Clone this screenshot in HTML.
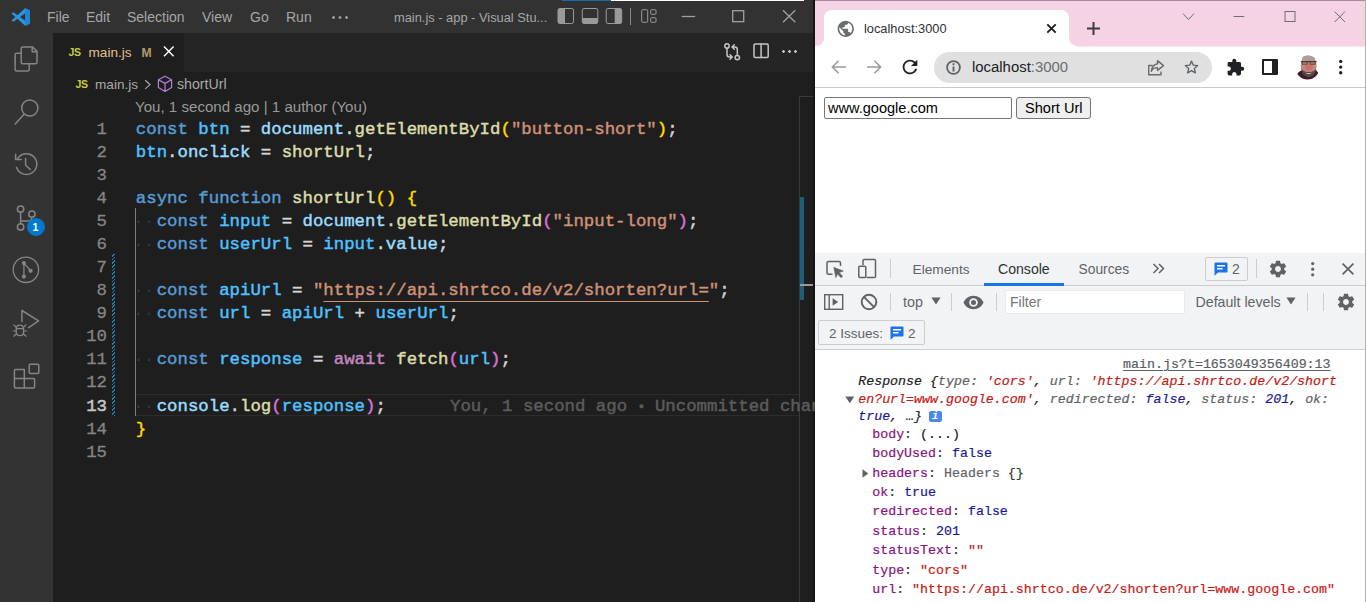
<!DOCTYPE html>
<html>
<head>
<meta charset="utf-8">
<title>screenshot</title>
<style>
*{box-sizing:border-box;margin:0;padding:0}
html,body{width:1366px;height:602px;overflow:hidden;background:#1e1e1e;font-family:"Liberation Sans",sans-serif;}
.abs{position:absolute}
#root{position:relative;width:1366px;height:602px;overflow:hidden}
/* ---------- VS CODE ---------- */
#vsc{position:absolute;left:0;top:0;width:815px;height:602px;background:#1e1e1e;overflow:hidden}
#titlebar{position:absolute;left:0;top:0;width:815px;height:33px;background:#323233;color:#a6a6a6;font-size:14px}
#titlebar .m{position:absolute;top:9px;line-height:17px;white-space:nowrap}
#actbar{position:absolute;left:0;top:33px;width:53px;height:569px;background:#333333}
#tabs{position:absolute;left:53px;top:33px;width:762px;height:39px;background:#252526}
#tab1{position:absolute;left:0;top:0;width:131px;height:39px;background:#1e1e1e}
#crumbs{position:absolute;left:53px;top:72px;width:762px;height:24px;background:#1e1e1e;color:#a9a9a9;font-size:14px}
.code{position:absolute;left:135.8px;white-space:pre;font-family:"Liberation Mono",monospace;font-size:17.37px;line-height:23px;height:23px;color:#d4d4d4;-webkit-text-stroke:0.45px}
.ln{position:absolute;left:53px;width:54px;text-align:right;font-family:"Liberation Mono",monospace;font-size:17.37px;line-height:23px;height:23px;color:#858585;-webkit-text-stroke:0.3px}
.js{font-size:10.5px;font-weight:bold;color:#cbcb41;line-height:12px;letter-spacing:-0.3px}
.ln.cur{color:#c6c6c6;-webkit-text-stroke:0.5px}
.ws{color:#383838;position:relative;left:-2.5px;-webkit-text-stroke:0}.u{text-decoration:underline;text-underline-offset:6px;text-decoration-thickness:1px}
.k{color:#569cd6}.v{color:#4fc1ff}.f{color:#dcdcaa}.s{color:#ce9178}.p{color:#9cdcfe}.y{color:#ffd700}.pk{color:#da70d6}.c{color:#c586c0}
/* ---------- CHROME ---------- */
#chr{position:absolute;left:815px;top:0;width:551px;height:602px;background:#fff;overflow:hidden}
#strip{position:absolute;left:0;top:0;width:551px;height:46px;background:#f6d3e4}
#ctab{position:absolute;left:9px;top:10px;width:245px;height:36px;background:#fff;border-radius:8px 8px 0 0}
#tool{position:absolute;left:0;top:46px;width:551px;height:42px;background:#fff;border-bottom:1px solid #c9c9c9}
#omni{position:absolute;left:119px;top:6px;width:278px;height:31px;border-radius:16px;background:#e0e0e0}
/* ---------- DEVTOOLS ---------- */
#dt{position:absolute;left:0;top:253px;width:551px;height:349px;background:#fff}
#dttabs{position:absolute;left:0;top:0;width:551px;height:33px;background:#f1f3f4;border-bottom:1px solid #cbcdd1;font-size:14.5px;color:#5f6368}
#dtbar{position:absolute;left:0;top:33px;width:551px;height:64px;background:#f1f3f4;border-bottom:1px solid #cbcdd1;font-size:14.5px;color:#5f6368}
.cl{position:absolute;white-space:pre;font-family:"Liberation Mono",monospace;font-size:13.3px;line-height:19px;height:19px;color:#303942;-webkit-text-stroke:0.2px}
.cl.it{font-style:italic;color:#202124}.cd{color:#202124}
.cn{color:#881280}.cs{color:#c41a16}.cb{color:#1a1a96}.cg{color:#5f6368}
</style>
</head>
<body>
<div id="root">

<!-- ================= VS CODE ================= -->
<div id="vsc">
  <div id="titlebar">
    <div class="abs" style="left:562px;top:0;width:49px;height:1px;background:#1b6aa5"></div>
    <div class="abs" style="left:611px;top:0;width:193px;height:1px;background:#ffffff"></div>
    <svg class="abs" style="left:10.500px;top:8px" width="19.500" height="18" viewBox="0 0 100 100" preserveAspectRatio="none">
      <path d="M72 2 L97 13 V87 L72 98 L33 60 L13 76 L2 69 L23 50 L2 31 L13 24 L33 40 Z M73 29 L46 50 L73 71 Z" fill="#2b96e0" fill-rule="evenodd"/>
      <path d="M72 2 L97 13 V87 L72 98 L73 71 V29 Z" fill="#1f86d0"/>
    </svg>
    <span class="m" style="left:47px">File</span>
    <span class="m" style="left:86px">Edit</span>
    <span class="m" style="left:127px">Selection</span>
    <span class="m" style="left:202px">View</span>
    <span class="m" style="left:250px">Go</span>
    <span class="m" style="left:286px">Run</span>
    <div class="abs" style="left:332px;top:15.5px;width:18px;height:3px;background:radial-gradient(circle at 1.5px 1.5px,#a6a6a6 1.1px,transparent 1.5px) 0 0/6.5px 3px repeat-x"></div>
    <span class="m" style="left:394px;font-size:12.85px">main.js - app - Visual Stu...</span>
    <svg class="abs" style="left:557px;top:7px" width="102" height="19" viewBox="0 0 102 19" fill="none" stroke="#9a9a9a" stroke-width="1">
      <rect x="1" y="1.5" width="15.5" height="15" rx="1.8"/><path d="M1 3 q0-1.5 1.5-1.5 H8 V16.5 H2.5 q-1.5 0-1.5-1.5Z" fill="#9a9a9a" stroke="none"/>
      <rect x="25.3" y="1.5" width="15.5" height="15" rx="1.8"/><path d="M25.3 11 H40.8 V15 q0 1.5-1.5 1.5 H26.8 q-1.5 0-1.5-1.5Z" fill="#9a9a9a" stroke="none"/>
      <rect x="49.2" y="1.5" width="15.5" height="15" rx="1.8"/><path d="M57.7 1.5 H63.2 q1.5 0 1.5 1.5 V15 q0 1.5-1.5 1.5 H57.7Z" fill="#9a9a9a" stroke="none"/>
      <path d="M73.5 1 V18" stroke="#8a8a8a"/>
      <rect x="84.7" y="2.7" width="6" height="12.6" rx="1"/><rect x="93.7" y="2.7" width="5.3" height="4.6" rx="1"/><rect x="93.7" y="10.7" width="5.3" height="4.6" rx="1"/>
    </svg>
    <svg class="abs" style="left:680px;top:8px" width="120" height="18" viewBox="0 0 120 18" fill="none" stroke="#a0a0a0" stroke-width="1.3">
      <path d="M1.7 8.5 H15.2"/>
      <rect x="52.7" y="2.7" width="11" height="11"/>
      <path d="M103 2.2 L115.3 14.2 M115.3 2.2 L103 14.2"/>
    </svg>
  </div>
  <div id="actbar">
    <svg class="abs" style="left:0;top:0" width="53" height="569" viewBox="0 33 53 569" fill="none" stroke="#858585" stroke-width="1.5" stroke-linejoin="round" stroke-linecap="round">
      <!-- explorer -->
      <path d="M22.7 47 H32.6 L37 51.4 V62.2 q0 1.5-1.5 1.5 H22.7 q-1.5 0-1.5-1.5 V48.5 q0-1.5 1.5-1.5 Z M32.2 47.2 V51.8 H36.8"/>
      <path d="M21 53.2 H16.6 q-1.5 0-1.5 1.5 V69.4 q0 1.5 1.5 1.5 H27.7 q1.5 0 1.5-1.5 V64"/>
      <!-- search -->
      <circle cx="29.8" cy="108" r="8.1"/><path d="M23.9 114.4 L15.2 124"/>
      <!-- history -->
      <path d="M17.6 158.6 A10.4 10.4 0 1 1 16.6 167.5"/>
      <path d="M15.6 154.2 V159.6 H21.2" />
      <path d="M25.6 158.4 V165.2 L30.2 169.4"/>
      <!-- source control -->
      <circle cx="20.6" cy="209.1" r="3.2"/><circle cx="20.6" cy="226.9" r="3.2"/><circle cx="31.9" cy="214.1" r="3.2"/>
      <path d="M20.6 212.4 V223.6 M31.9 217.4 q0 3.6-4.5 3.6 H20.8"/>
      <!-- git graph -->
      <circle cx="25.9" cy="269.8" r="12.7" stroke-width="1.3"/>
      <circle cx="23.9" cy="263.1" r="2.1" fill="#858585" stroke="none"/><circle cx="30.6" cy="270.8" r="2.1" fill="#858585" stroke="none"/><circle cx="23.9" cy="276.6" r="2.1" fill="#858585" stroke="none"/>
      <path d="M23.9 263.1 V276.6 M23.9 263.1 L30.6 270.8" stroke-width="1.3"/>
      <!-- run and debug -->
      <path d="M21.9 321.5 V310.5 L38.6 320.8 L28.6 327.6"/>
      <path d="M16.2 329.3 q0-4.2 3.7-4.2 q3.7 0 3.7 4.2 V331.4 q0 4.2-3.7 4.2 q-3.7 0-3.7-4.2 Z M16.4 328.6 H23.4" stroke-width="1.4"/>
      <path d="M16 327 L13.8 324.8 M23.8 327 L26 324.8 M15.8 331 H13.2 M24 331 H26.6 M16.2 334 L13.8 336.2 M23.6 334 L26 336.2" stroke-width="1.2"/>
      <!-- extensions -->
      <path d="M14.4 370.6 q0-1.2 1.2-1.2 H24.3 V378.4 H33.4 q1.2 0 1.2 1.2 V386.8 q0 1.2-1.2 1.2 H15.6 q-1.2 0-1.2-1.2 Z M14.4 378.4 H24.3 V388"/>
      <rect x="29.2" y="364.2" width="9.6" height="9.2" rx="1.2"/>
    </svg>
    <div class="abs" style="left:26.5px;top:184.5px;width:18px;height:18px;border-radius:9px;background:#007acc;color:#fff;font-size:10.5px;font-weight:bold;line-height:18px;text-align:center">1</div>
  </div>
  <div id="tabs"><div id="tab1">
      <span class="abs js" style="left:15.5px;top:13px">JS</span>
      <span class="abs" style="left:35.5px;top:11px;font-size:13.6px;line-height:17px;color:#e2c08d">main.js</span>
      <span class="abs" style="left:88.5px;top:11.5px;font-size:12.2px;font-weight:bold;line-height:17px;color:#b39a6f">M</span>
      <svg class="abs" style="left:109px;top:12px" width="14" height="14" viewBox="0 0 14 14" stroke="#ffffff" stroke-width="1.4" fill="none"><path d="M2 1.6 L11.6 11.2 M11.6 1.6 L2 11.2"/></svg>
    </div>
    <svg class="abs" style="left:670px;top:9px" width="76" height="20" viewBox="0 0 76 20" fill="none" stroke="#c5c5c5" stroke-width="1.5" stroke-linecap="round" stroke-linejoin="round">
      <circle cx="4" cy="4" r="2.2"/><path d="M4 6.2 V12.5 q0 2.5 2.5 2.5 H9 M7 12.8 L9.3 15 L7 17.2"/>
      <circle cx="14.3" cy="15.6" r="2.2"/><path d="M14.3 13.4 V7.5 q0-2.5-2.5-2.5 H9.3 M11.3 2.8 L9 5 L11.3 7.2"/>
      <rect x="31" y="2" width="14.2" height="13.4" rx="1.2"/><path d="M38.1 2 V15.4"/>
    </svg>
    <div class="abs" style="left:729px;top:17px;width:16px;height:3px;background:radial-gradient(circle at 1.5px 1.5px,#c5c5c5 1.2px,transparent 1.5px) 0 0/6px 3px repeat-x"></div>
  </div>
  <div id="crumbs">
    <span class="abs js" style="left:22.5px;top:5.5px">JS</span>
    <span class="abs" style="left:42px;top:4px;font-size:13.6px;line-height:17px">main.js</span>
    <svg class="abs" style="left:90px;top:5px" width="10" height="14" viewBox="0 0 10 14" fill="none" stroke="#a9a9a9" stroke-width="1.2"><path d="M2.2 3.3 L7 7.6 L2.2 11.9"/></svg>
    <svg class="abs" style="left:104px;top:3px" width="16" height="18" viewBox="0 0 16 18" fill="none" stroke="#b180d7" stroke-width="1.2" stroke-linejoin="round"><path d="M8 1.3 L14.6 4.8 V12.6 L8 16.4 L1.4 12.6 V4.8 Z M1.4 4.8 L8 8.4 L14.6 4.8 M8 8.4 V16.4"/></svg>
    <span class="abs" style="left:124px;top:4px;font-size:14.2px;line-height:17px">shortUrl</span>
  </div>
  <div id="editor">
    <div class="abs" style="left:135px;top:98px;font-size:15.1px;line-height:18px;color:#999999;white-space:nowrap" id="lens">You, 1 second ago | 1 author (You)</div>
    <div class="abs" id="curline" style="left:136px;top:393.5px;width:664px;height:22.6px;border-top:1px solid #2c2c2c;border-bottom:1px solid #2c2c2c"></div>
    <div class="abs" id="guide" style="left:135px;top:208px;width:1px;height:208px;background:#7e7e7e"></div>
    <div class="abs" id="hatch" style="left:112px;top:254px;width:3px;height:162px;background:repeating-linear-gradient(-45deg,#1b81a8 0,#1b81a8 1.2px,#1e1e1e 1.2px,#1e1e1e 2.6px)"></div>
    <div class="abs" id="ruler" style="left:799px;top:96px;width:16px;height:506px;border-left:1px solid #3a3a3a;border-top:1px solid #3a3a3a"></div>
    <div class="abs" style="left:800px;top:197px;width:4px;height:103px;background:#1b5f7c"></div>
    <div class="abs" style="left:800px;top:284px;width:14px;height:2px;background:#9a9a9a"></div>
    <div class="abs" style="left:813px;top:0;width:2px;height:602px;background:#151515"></div>
    <div class="ln" style="top:117.60px">1</div>
    <div class="code" style="top:117.60px"><span class="k">const</span> <span class="v">btn</span> = <span class="p">document</span>.<span class="f">getElementById</span><span class="y">(</span><span class="s">"button-short"</span><span class="y">)</span>;</div>
    <div class="ln" style="top:140.68px">2</div>
    <div class="code" style="top:140.68px"><span class="v">btn</span>.<span class="p">onclick</span> = <span class="f">shortUrl</span>;</div>
    <div class="ln" style="top:163.76px">3</div>
    <div class="ln" style="top:186.84px">4</div>
    <div class="code" style="top:186.84px"><span class="k">async</span> <span class="k">function</span> <span class="f">shortUrl</span><span class="y">()</span> <span class="y">{</span></div>
    <div class="ln" style="top:209.92px">5</div>
    <div class="code" style="top:209.92px"><span class="ws">··</span><span class="k">const</span> <span class="v">input</span> = <span class="p">document</span>.<span class="f">getElementById</span><span class="pk">(</span><span class="s">"input-long"</span><span class="pk">)</span>;</div>
    <div class="ln" style="top:233.00px">6</div>
    <div class="code" style="top:233.00px"><span class="ws">··</span><span class="k">const</span> <span class="v">userUrl</span> = <span class="v">input</span>.<span class="p">value</span>;</div>
    <div class="ln" style="top:256.08px">7</div>
    <div class="ln" style="top:279.16px">8</div>
    <div class="code" style="top:279.16px"><span class="ws">··</span><span class="k">const</span> <span class="v">apiUrl</span> = <span class="s">"<span class="u">https://api.shrtco.de/v2/shorten?url=</span>"</span>;</div>
    <div class="ln" style="top:302.24px">9</div>
    <div class="code" style="top:302.24px"><span class="ws">··</span><span class="k">const</span> <span class="v">url</span> = <span class="v">apiUrl</span> + <span class="v">userUrl</span>;</div>
    <div class="ln" style="top:325.32px">10</div>
    <div class="ln" style="top:348.40px">11</div>
    <div class="code" style="top:348.40px"><span class="ws">··</span><span class="k">const</span> <span class="v">response</span> = <span class="c">await</span> <span class="f">fetch</span><span class="pk">(</span><span class="v">url</span><span class="pk">)</span>;</div>
    <div class="ln" style="top:371.48px">12</div>
    <div class="ln cur" style="top:394.56px">13</div>
    <div class="code" style="top:394.56px"><span class="ws">··</span><span class="p">console</span>.<span class="f">log</span><span class="pk">(</span><span class="v">response</span><span class="pk">)</span>;</div>
    <div class="ln" style="top:417.64px">14</div>
    <div class="code" style="top:417.64px"><span class="y">}</span></div>
    <div class="ln" style="top:440.72px">15</div>
    <div class="code" id="ghost" style="left:450px;top:394.56px;color:#5c5c5c">You, 1 second ago <span style="display:inline-block;width:7px;text-align:center;font-size:13px">•</span> Uncommitted changes</div>
  </div>
</div>

<!-- ================= CHROME ================= -->
<div id="chr">
  <div id="strip">
    <div class="abs" style="left:0;top:0;width:551px;height:1px;background:#a98a9c"></div>
    <div id="ctab"></div>
    <svg class="abs" style="left:1px;top:38px" width="8" height="8" viewBox="0 0 8 8"><path d="M8 0 V8 H0 A8 8 0 0 0 8 0Z" fill="#fff"/></svg>
    <svg class="abs" style="left:254px;top:38px" width="8" height="8" viewBox="0 0 8 8"><path d="M0 0 V8 H8 A8 8 0 0 1 0 0Z" fill="#fff"/></svg>
    <!-- globe favicon -->
    <svg class="abs" style="left:20.800px;top:18.800px" width="19.500" height="19.500" viewBox="0 0 24 24"><path fill="#6a6d70" d="M12 2C6.48 2 2 6.48 2 12s4.48 10 10 10 10-4.48 10-10S17.52 2 12 2zm-1 17.93c-3.95-.49-7-3.85-7-7.93 0-.62.08-1.21.21-1.79L9 15v1c0 1.1.9 2 2 2v1.930zm6.900-2.540c-.26-.81-1-1.390-1.900-1.390h-1v-3c0-.55-.45-1-1-1H8v-2h2c.55 0 1-.45 1-1V7h2c1.100 0 2-.9 2-2v-.41c2.930 1.190 5 4.060 5 7.410 0 2.080-.8 3.970-2.100 5.390z"/></svg>
    <span class="abs" style="left:49px;top:20px;font-size:12.8px;line-height:17px;color:#2f3033;white-space:nowrap">localhost:3000</span>
    <svg class="abs" style="left:231px;top:23px" width="11" height="11" viewBox="0 0 11 11" stroke="#1f1f1f" stroke-width="1.9" fill="none"><path d="M1.3 1.3 L9.7 9.7 M9.7 1.3 L1.3 9.7"/></svg>
    <svg class="abs" style="left:271px;top:21px" width="15" height="15" viewBox="0 0 15 15" stroke="#3c3c3c" stroke-width="2" fill="none"><path d="M7.5 1 V14 M1 7.500 H14"/></svg>
    <svg class="abs" style="left:360px;top:8px" width="180" height="18" viewBox="0 0 180 18" stroke="#6e6e6e" stroke-width="1" fill="none">
      <path d="M8 5.600 L13.500 11.500 L19 5.600"/>
      <path d="M58.600 8.500 H69.200"/>
      <rect x="110" y="3.500" width="10" height="10"/>
      <path d="M159.600 3.600 L170 14 M170 3.600 L159.600 14"/>
    </svg>
  </div>
  <div class="abs" style="left:262px;top:46px;width:289px;height:1px;background:#f9e6ef;z-index:2"></div>
  <div id="tool">
    <svg class="abs" style="left:15px;top:12px" width="18" height="18" viewBox="0 0 18 18" stroke="#9b9b9b" stroke-width="1.6" fill="none"><path d="M16 9 H2.600 M8.600 2.800 L2.400 9 L8.600 15.200"/></svg>
    <svg class="abs" style="left:50px;top:12px" width="18" height="18" viewBox="0 0 18 18" stroke="#9b9b9b" stroke-width="1.6" fill="none"><path d="M2 9 H15.400 M9.400 2.800 L15.600 9 L9.400 15.200"/></svg>
    <svg class="abs" style="left:84px;top:10px" width="22" height="22" viewBox="0 0 24 24"><path fill="#202124" d="M17.650 6.350C16.200 4.900 14.210 4 12 4c-4.420 0-7.990 3.580-7.990 8s3.570 8 7.990 8c3.730 0 6.840-2.550 7.730-6h-2.080c-.82 2.330-3.040 4-5.650 4-3.310 0-6-2.690-6-6s2.690-6 6-6c1.660 0 3.140.69 4.220 1.780L13 11h7V4l-2.350 2.350z"/></svg>
    <div id="omni">
      <svg class="abs" style="left:11px;top:7px" width="17" height="17" viewBox="0 0 17 17" fill="none" stroke="#5f6368"><circle cx="8.500" cy="8.500" r="6.400" stroke-width="1.800"/><path d="M8.500 4.300 V6.300 M8.500 7.600 V12.600" stroke-width="1.900"/></svg>
      <span class="abs" style="left:38px;top:6px;font-size:14.900px;line-height:18px;color:#202124;white-space:nowrap">localhost<span style="color:#6a6e72">:3000</span></span>
      <svg class="abs" style="left:213px;top:7px" width="18" height="17" viewBox="0 0 18 17" fill="none" stroke="#6b6b6b" stroke-width="1.400" stroke-linejoin="round"><path d="M5.500 6.500 H1.700 V15.800 H14 V12.500"/><path d="M10.500 1.600 L16.500 6.600 L10.500 11.400 V8.600 C7.500 8.600 5.500 9.600 4.300 12.300 C4.700 8.300 7 5.300 10.500 4.700 Z"/></svg>
      <svg class="abs" style="left:249px;top:7px" width="17" height="16" viewBox="0 0 24 24"><path fill="none" stroke="#5f6368" stroke-width="2" stroke-linejoin="round" d="M12 3.200 L14.700 9.300 L21.300 9.900 L16.300 14.300 L17.800 20.800 L12 17.400 L6.200 20.800 L7.700 14.300 L2.700 9.900 L9.300 9.300 Z"/></svg>
    </div>
    <!-- puzzle -->
    <svg class="abs" style="left:411px;top:12px" width="19" height="19" viewBox="0 0 24 24"><path fill="#202124" d="M20.500 11H19V7c0-1.100-.9-2-2-2h-4V3.500C13 2.120 11.880 1 10.500 1S8 2.120 8 3.500V5H4c-1.100 0-1.990.9-1.990 2v3.800H3.500c1.490 0 2.700 1.210 2.700 2.700s-1.210 2.700-2.700 2.700H2V20c0 1.100.9 2 2 2h3.800v-1.500c0-1.490 1.210-2.700 2.700-2.700 1.490 0 2.700 1.210 2.700 2.700V22H17c1.100 0 2-.9 2-2v-4h1.500c1.380 0 2.500-1.120 2.500-2.500S21.880 11 20.500 11z"/></svg>
    <!-- side panel -->
    <div class="abs" style="left:447px;top:13px;width:16px;height:16px;border:2px solid #202124;border-right-width:6px;background:#fff;border-radius:1px"></div>
    <!-- avatar -->
    <svg class="abs" style="left:480px;top:9px" width="25" height="25" viewBox="0 0 25 25">
      <defs><clipPath id="av"><circle cx="12.500" cy="12.500" r="12"/></clipPath></defs>
      <g clip-path="url(#av)">
        <rect width="25" height="25" fill="#fff"/>
        <path d="M0 25 Q1 16.500 8 15 L19.500 14 Q24 16 24.500 25Z" fill="#3a1c2a"/>
        <ellipse cx="13.700" cy="10.600" rx="7.900" ry="10.800" fill="#c08a7c"/>
        <ellipse cx="13.700" cy="3.600" rx="6.800" ry="3.600" fill="#b39a9c"/>
        <ellipse cx="13.700" cy="12.200" rx="3.600" ry="3.400" fill="#c8726c"/>
        <path d="M6.300 13 Q6.800 21.500 13.700 22.200 Q20.600 21.500 21.200 13 Q19.500 17.200 13.700 17 Q8 17.200 6.300 13Z" fill="#5a4644"/>
        <path d="M9.800 17.600 Q13.700 20.400 17.600 17.600 Q13.700 18.600 9.800 17.600Z" fill="#e8d0c8"/>
        <path d="M5.800 6.600 H21.600" stroke="#4a3a3a" stroke-width="1.200"/>
        <path d="M7.200 6.600 h5 v2.600 h-5z M15.200 6.600 h5 v2.600 h-5z" fill="none" stroke="#4a3a3a" stroke-width="0.800"/>
      </g>
    </svg>
    <svg class="abs" style="left:523px;top:12px" width="6" height="18" viewBox="0 0 6 18" fill="#202124"><circle cx="2.700" cy="3.400" r="1.700"/><circle cx="2.700" cy="9.100" r="1.700"/><circle cx="2.700" cy="14.700" r="1.700"/></svg>
  </div>
  <div id="page">
    <div class="abs" style="left:9px;top:97px;width:188px;height:22px;border:1px solid #767676;border-radius:2px;background:#fff"></div>
    <span class="abs" style="left:13px;top:100px;font-size:14.550px;line-height:17px;color:#000;white-space:nowrap">www.google.com</span>
    <div class="abs" style="left:201px;top:97px;width:75px;height:22px;border:1px solid #767676;border-radius:3px;background:#efefef"></div>
    <span class="abs" style="left:210px;top:100px;font-size:14.600px;line-height:17px;color:#000;white-space:nowrap">Short Url</span>
  </div>
  <div class="abs" style="left:550px;top:0;width:1px;height:602px;background:#b0b0b0;z-index:5"></div>
  <div id="dt">
    <div id="dttabs">
      <!-- inspect -->
      <svg class="abs" style="left:10px;top:7px" width="20" height="19" viewBox="0 0 20 19" fill="none" stroke="#5f6368" stroke-width="1.500" stroke-linejoin="round"><path d="M7.500 14.200 H3.500 q-1.500 0-1.500-1.500 V3 q0-1.500 1.500-1.500 H14 q1.500 0 1.500 1.500 V6"/><path d="M8.800 7.300 L18.300 11 L14.200 12.600 L17.600 16.200 L16 17.700 L12.600 14 L10.800 17.600 Z" fill="#5f6368" stroke-width="0.600"/></svg>
      <!-- device -->
      <svg class="abs" style="left:42px;top:5px" width="20" height="21" viewBox="0 0 20 21" fill="none" stroke="#5f6368" stroke-width="1.500" stroke-linejoin="round"><path d="M6 7 V2.500 q0-1 1-1 H17.500 q1 0 1 1 V18.500 q0 1-1 1 H9.500"/><rect x="1.800" y="8.200" width="7" height="11.300" rx="1"/></svg>
      <div class="abs" style="left:75px;top:6px;width:1px;height:19px;background:#cbcdd1"></div>
      <span class="abs" style="left:97.500px;top:8px;line-height:17px;font-size:13.700px">Elements</span>
      <span class="abs" style="left:183px;top:8px;line-height:17px;font-size:14.100px;color:#303235">Console</span>
      <div class="abs" style="left:169px;top:30px;width:80px;height:3px;background:#1a73e8"></div>
      <span class="abs" style="left:263.500px;top:8px;line-height:17px;font-size:13.800px">Sources</span>
      <svg class="abs" style="left:337px;top:10px" width="13" height="11" viewBox="0 0 13 11" fill="none" stroke="#5f6368" stroke-width="1.500"><path d="M1.500 1 L6 5.500 L1.500 10 M7 1 L11.500 5.500 L7 10"/></svg>
      <div class="abs" style="left:389.500px;top:3.500px;width:43px;height:24px;border:1px solid #cbcdd1;border-radius:2px;background:#f1f3f4"></div>
      <svg class="abs bub" style="left:399px;top:9px" width="14" height="14" viewBox="0 0 14 14"><path d="M1.500 0.500 H12.500 q1 0 1 1 V9.500 q0 1-1 1 H4 L0.500 13.800 V1.500 q0-1 1-1Z" fill="#1a73e8"/><path d="M3 3.800 H11 M3 6.800 H8.500" stroke="#fff" stroke-width="1.400"/></svg>
      <span class="abs" style="left:417px;top:8px;line-height:17px;font-size:14px">2</span>
      <div class="abs" style="left:440.500px;top:6px;width:1px;height:19px;background:#cbcdd1"></div>
      <svg class="abs gear" style="left:452.500px;top:6px" width="20" height="20" viewBox="0 0 24 24"><path fill="#5f6368" d="M19.430 12.980c.040-.32.070-.640.070-.980s-.030-.660-.070-.980l2.110-1.650c.19-.15.240-.42.120-.640l-2-3.460c-.12-.22-.39-.3-.61-.22l-2.490 1c-.52-.4-1.080-.73-1.690-.98l-.38-2.650C14.460 2.180 14.250 2 14 2h-4c-.25 0-.46.180-.49.420l-.38 2.650c-.61.250-1.170.59-1.690.98l-2.490-1c-.23-.09-.49 0-.61.220l-2 3.460c-.13.220-.07.490.12.640l2.110 1.650c-.040.320-.070.650-.070.980s.030.660.070.980l-2.110 1.650c-.19.150-.24.420-.12.640l2 3.460c.12.220.39.300.61.220l2.490-1c.52.400 1.080.73 1.690.98l.38 2.650c.030.240.24.420.49.420h4c.25 0 .46-.18.490-.42l.38-2.650c.61-.25 1.170-.59 1.690-.98l2.490 1c.23.090.49 0 .61-.22l2-3.460c.12-.22.070-.49-.12-.64l-2.110-1.650zM12 15.500c-1.930 0-3.500-1.570-3.500-3.500s1.570-3.500 3.500-3.500 3.500 1.570 3.500 3.500-1.570 3.500-3.500 3.500z"/></svg>
      <svg class="abs" style="left:495px;top:8px" width="6" height="17" viewBox="0 0 6 17" fill="#5f6368"><circle cx="2.700" cy="2.600" r="1.600"/><circle cx="2.700" cy="8.200" r="1.600"/><circle cx="2.700" cy="13.800" r="1.600"/></svg>
      <svg class="abs" style="left:526px;top:9px" width="14" height="14" viewBox="0 0 14 14" fill="none" stroke="#5f6368" stroke-width="1.700"><path d="M1.600 1.600 L12.400 12.400 M12.400 1.600 L1.600 12.400"/></svg>
    </div>
    <div id="dtbar">
      <!-- sidebar toggle -->
      <svg class="abs" style="left:9px;top:8px" width="20" height="16" viewBox="0 0 20 16" fill="none" stroke="#5f6368" stroke-width="1.400"><rect x="0.700" y="0.700" width="18" height="14.600"/><path d="M5.200 0.700 V15.300"/><path d="M8.600 4.300 L14.200 8 L8.600 11.700Z" fill="#5f6368" stroke="none"/></svg>
      <!-- clear -->
      <svg class="abs" style="left:44.500px;top:7px" width="18" height="18" viewBox="0 0 18 18" fill="none" stroke="#5f6368" stroke-width="1.900"><circle cx="9" cy="9" r="7.300"/><path d="M3.900 3.900 L14.100 14.100"/></svg>
      <div class="abs" style="left:75px;top:7px;width:1px;height:18px;background:#cbcdd1"></div>
      <span class="abs" style="left:88px;top:7.5px;line-height:17px;font-size:14.300px">top</span>
      <svg class="abs" style="left:116px;top:11px" width="10" height="8" viewBox="0 0 10 8"><path d="M0.400 0.600 H9.600 L5 7.600Z" fill="#5f6368"/></svg>
      <div class="abs" style="left:136px;top:7px;width:1px;height:18px;background:#cbcdd1"></div>
      <!-- eye -->
      <svg class="abs" style="left:148px;top:8.500px" width="21" height="15" viewBox="0 0 21 15"><path d="M10.500 0.800 C5.500 0.800 2 4 0.500 7.500 C2 11 5.500 14.200 10.500 14.200 C15.500 14.200 19 11 20.500 7.500 C19 4 15.500 0.800 10.500 0.800Z" fill="#5f6368"/><circle cx="10.500" cy="7.500" r="4.300" fill="#f1f3f4"/><circle cx="10.500" cy="7.500" r="2.500" fill="#5f6368"/></svg>
      <div class="abs" style="left:181px;top:7px;width:1px;height:18px;background:#cbcdd1"></div>
      <div class="abs" style="left:189.500px;top:3.500px;width:180px;height:24px;background:#fff;border:1px solid #e8eaed"></div>
      <span class="abs" style="left:195px;top:8px;line-height:17px;font-size:14px;color:#757575">Filter</span>
      <span class="abs" style="left:380.500px;top:7.5px;line-height:17px;font-size:14.200px;white-space:nowrap">Default levels</span>
      <svg class="abs" style="left:471px;top:11px" width="10" height="8" viewBox="0 0 10 8"><path d="M0.400 0.600 H9.600 L5 7.600Z" fill="#5f6368"/></svg>
      <div class="abs" style="left:492px;top:7px;width:1px;height:18px;background:#cbcdd1"></div>
      <div class="abs" style="left:508px;top:7px;width:1px;height:18px;background:#cbcdd1"></div>
      <svg class="abs gear" style="left:521px;top:6px" width="20" height="20" viewBox="0 0 24 24"><path fill="#5f6368" d="M19.430 12.980c.040-.32.070-.640.070-.980s-.030-.660-.070-.980l2.110-1.650c.19-.15.240-.42.120-.640l-2-3.460c-.12-.22-.39-.3-.61-.22l-2.490 1c-.52-.4-1.080-.73-1.690-.98l-.38-2.650C14.460 2.180 14.250 2 14 2h-4c-.25 0-.46.180-.49.420l-.38 2.650c-.61.250-1.170.59-1.690.98l-2.490-1c-.23-.09-.49 0-.61.220l-2 3.460c-.13.220-.07.490.12.640l2.110 1.650c-.040.320-.070.650-.070.980s.030.660.070.980l-2.110 1.650c-.19.150-.24.420-.12.640l2 3.460c.12.220.39.300.61.220l2.490-1c.52.400 1.080.73 1.690.98l.38 2.650c.030.240.24.420.49.420h4c.25 0 .46-.18.490-.42l.38-2.650c.61-.25 1.170-.59 1.690-.98l2.490 1c.23.090.49 0 .61-.22l2-3.460c.12-.22.070-.49-.12-.64l-2.110-1.650zM12 15.500c-1.930 0-3.500-1.570-3.500-3.500s1.570-3.500 3.500-3.500 3.500 1.570 3.500 3.500-1.570 3.500-3.500 3.500z"/></svg>
      <!-- issues row -->
      <div class="abs" style="left:2.500px;top:33.500px;width:107px;height:25px;border:1px solid #cbcdd1;border-radius:2px"></div>
      <span class="abs" style="left:14px;top:39px;line-height:17px;font-size:13.500px;white-space:nowrap">2 Issues:</span>
      <svg class="abs" style="left:75px;top:39.500px" width="14" height="14" viewBox="0 0 14 14"><path d="M1.500 0.500 H12.500 q1 0 1 1 V9.500 q0 1-1 1 H4 L0.500 13.800 V1.500 q0-1 1-1Z" fill="#1a73e8"/><path d="M3 3.800 H11 M3 6.800 H8.500" stroke="#fff" stroke-width="1.400"/></svg>
      <span class="abs" style="left:93px;top:39px;line-height:17px;font-size:13.500px">2</span>
    </div>
    <div id="dtlog">
      <div class="cl" style="left:308.1px;top:102.15px;color:#5a5e63;text-decoration:underline;text-underline-offset:2px">main.js?t=1653049356409:13</div>
      <div class="cl it" style="left:43.2px;top:118.95px">Response {<span class="cg">type: </span><span class="cs">'cors'</span>, <span class="cg">url: </span><span class="cs">'https://api.shrtco.de/v2/short</span></div>
      <div class="cl it" style="left:43.2px;top:137.35px"><span class="cs">en?url=www.google.com'</span>, <span class="cg">redirected: </span><span class="cb">false</span>, <span class="cg">status: </span><span class="cb">201</span>, <span class="cg">ok: </span></div>
      <div class="cl it" style="left:43.2px;top:153.95px"><span class="cb">true</span>, …}</div>
      <svg class="abs" style="left:30px;top:143px" width="10" height="8" viewBox="0 0 10 8"><path d="M0.300 0.500 H9.300 L4.800 7.200Z" fill="#5f6368"/></svg>
      <div class="abs" style="left:113.500px;top:157.500px;width:13.500px;height:11px;border-radius:2px;background:#4d88e8;color:#fff;font-family:'Liberation Mono',monospace;font-style:italic;font-weight:bold;font-size:10.500px;line-height:11px;text-align:center">i</div>
      <div class="cl" style="left:57.2px;top:171.95px"><span class="cn">body</span>: <span class="cd">(...)</span></div>
      <div class="cl" style="left:57.2px;top:191.32px"><span class="cn">bodyUsed</span>: <span class="cb">false</span></div>
      <div class="cl" style="left:57.2px;top:210.70px"><span class="cn">headers</span>: <span class="cg">Headers</span> {}</div>
      <div class="cl" style="left:57.2px;top:230.07px"><span class="cn">ok</span>: <span class="cb">true</span></div>
      <div class="cl" style="left:57.2px;top:249.45px"><span class="cn">redirected</span>: <span class="cb">false</span></div>
      <div class="cl" style="left:57.2px;top:268.83px"><span class="cn">status</span>: <span class="cb">201</span></div>
      <div class="cl" style="left:57.2px;top:288.20px"><span class="cn">statusText</span>: <span class="cs">""</span></div>
      <div class="cl" style="left:57.2px;top:307.58px"><span class="cn">type</span>: <span class="cs">"cors"</span></div>
      <div class="cl" style="left:57.2px;top:326.95px"><span class="cn">url</span>: <span class="cs">"https://api.shrtco.de/v2/shorten?url=www.google.com"</span></div>
      <svg class="abs" style="left:46.500px;top:215.500px" width="7" height="9" viewBox="0 0 7 9"><path d="M0.500 0.300 L6.300 4.500 L0.500 8.700Z" fill="#5f6368"/></svg>
    </div>
  </div>
</div>

</div>
</body>
</html>
